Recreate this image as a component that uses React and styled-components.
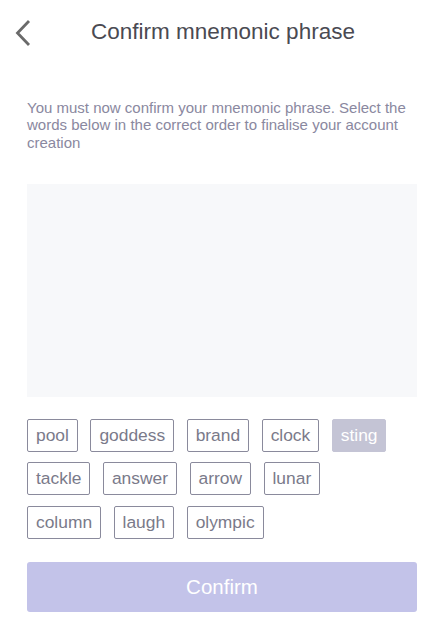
import styled, { createGlobalStyle } from 'styled-components';

const GlobalStyle = createGlobalStyle`
	body {
		margin: 0;
		background: #ffffff;
		font-family: 'Liberation Sans', Arial, sans-serif;
	}
`;

const WORDS = [
	'pool', 'goddess', 'brand', 'clock', 'sting',
	'tackle', 'answer', 'arrow', 'lunar',
	'column', 'laugh', 'olympic',
];
const SELECTED = ['sting'];

const Page = styled.div`
	width: 445px;
	height: 632px;
	box-sizing: border-box;
	padding: 0 28px 0 27px;
	display: flex;
	flex-direction: column;
`;

const Header = styled.header`
	position: relative;
	height: 66px;
	display: flex;
	align-items: center;
	justify-content: center;
`;

const BackButton = styled.button`
	position: absolute;
	left: -13px;
	top: 19px;
	width: 24px;
	height: 28px;
	padding: 0;
	border: none;
	background: none;
	cursor: pointer;
`;

const Title = styled.h1`
	margin: -2px 0 0 2px;
	font-size: 22.5px;
	font-weight: 400;
	color: #4a4a52;
`;

const Description = styled.p`
	margin: 33px 0 0;
	font-size: 15px;
	line-height: 17.3px;
	color: #8a88a0;
`;

const PhraseBox = styled.div`
	margin-top: 33px;
	height: 213px;
	background: #f7f8fa;
`;

const WordList = styled.div`
	margin-top: 22px;
	display: flex;
	flex-wrap: wrap;
	row-gap: 10.5px;
	margin-right: -1px;
`;

const Word = styled.button`
	height: 33px;
	box-sizing: border-box;
	margin-right: 12.5px;
	padding: 0 8px;
	border: 1px solid ${({ $selected }) => ($selected ? '#c4c4d5' : '#8a8a9c')};
	border-radius: 2px;
	background: ${({ $selected }) => ($selected ? '#c4c4d5' : '#ffffff')};
	color: ${({ $selected }) => ($selected ? '#ffffff' : '#7a7a8a')};
	font-family: inherit;
	font-size: 17.4px;
	line-height: 31px;
`;

const ConfirmButton = styled.button`
	margin-top: 23px;
	height: 50px;
	width: 100%;
	border: none;
	border-radius: 3px;
	background: #c3c3e9;
	color: #ffffff;
	font-family: inherit;
	font-size: 20.5px;
`;

const Chevron = () => (
	<svg width="24" height="28" viewBox="0 0 24 28">
		<path d="M15 2 L3.5 14 L15 26" fill="none" stroke="#6a6a6a" strokeWidth="2.8" />
	</svg>
);

export default function App() {
	return (
		<>
			<GlobalStyle />
			<Page>
				<Header>
					<BackButton aria-label="Back">
						<Chevron />
					</BackButton>
					<Title>Confirm mnemonic phrase</Title>
				</Header>
				<Description>
					You must now confirm your mnemonic phrase. Select the words below in the
					correct order to finalise your account creation
				</Description>
				<PhraseBox />
				<WordList>
					{WORDS.map((word) => (
						<Word key={word} $selected={SELECTED.includes(word)}>
							{word}
						</Word>
					))}
				</WordList>
				<ConfirmButton disabled>Confirm</ConfirmButton>
			</Page>
		</>
	);
}
